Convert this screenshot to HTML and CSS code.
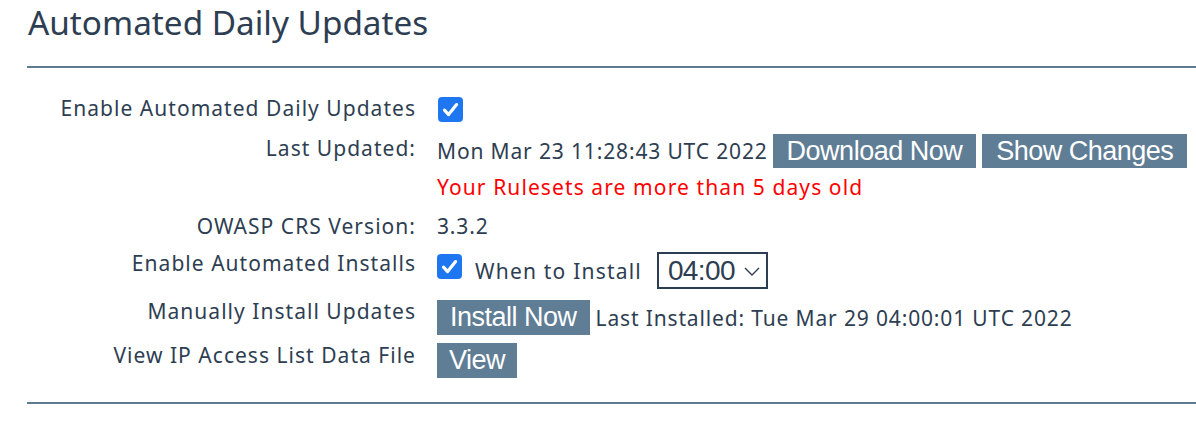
FILE: index.html
```html
<!DOCTYPE html>
<html>
<head>
<meta charset="utf-8">
<link rel="stylesheet" href="styles.css">
</head>
<body>
<div class="page">
  <h1 class="title">Automated Daily Updates</h1>
  <hr class="rule rule-top">
  <div class="form">
    <div class="row row-daily">
      <div class="label">Enable Automated Daily Updates</div>
      <div class="value value-inline"><span class="check"><svg viewBox="0 0 25 25" width="25" height="25"><rect x="0" y="0" width="25" height="25" rx="4" fill="#1e77f0"/><path d="M6.5 13.2 L10.6 17.6 L18.6 7.6" fill="none" stroke="#fff" stroke-width="3.2" stroke-linecap="round" stroke-linejoin="round"/></svg></span></div>
    </div>
    <div class="row row-updated">
      <div class="label">Last Updated:</div>
      <div class="value value-inline">
        <span class="text">Mon Mar 23 11:28:43 UTC 2022</span>
        <button class="btn btn-download">Download Now</button>
        <button class="btn btn-changes">Show Changes</button>
      </div>
    </div>
    <div class="row row-warning">
      <div class="label"></div>
      <div class="value warning">Your Rulesets are more than 5 days old</div>
    </div>
    <div class="row row-version">
      <div class="label">OWASP CRS Version:</div>
      <div class="value">3.3.2</div>
    </div>
    <div class="row row-installs">
      <div class="label">Enable Automated Installs</div>
      <div class="value value-inline">
        <span class="check"><svg viewBox="0 0 25 25" width="25" height="25"><rect x="0" y="0" width="25" height="25" rx="4" fill="#1e77f0"/><path d="M6.5 13.2 L10.6 17.6 L18.6 7.6" fill="none" stroke="#fff" stroke-width="3.2" stroke-linecap="round" stroke-linejoin="round"/></svg></span>
        <span class="text when">When to Install</span>
        <span class="select"><span class="select-text">04:00</span><svg class="chev" viewBox="0 0 16 9" width="16" height="9"><path d="M1 1 L8 8 L15 1" fill="none" stroke="#2e3e50" stroke-width="1.4"/></svg></span>
      </div>
    </div>
    <div class="row row-manual">
      <div class="label">Manually Install Updates</div>
      <div class="value value-inline">
        <button class="btn btn-install">Install Now</button>
        <span class="text installed">Last Installed: Tue Mar 29 04:00:01 UTC 2022</span>
      </div>
    </div>
    <div class="row row-view">
      <div class="label">View IP Access List Data File</div>
      <div class="value value-inline">
        <button class="btn btn-view">View</button>
      </div>
    </div>
  </div>
  <hr class="rule rule-bottom">
</div>
</body>
</html>
```
FILE: styles.css
```css
html, body {
  margin: 0;
  padding: 0;
  background: #ffffff;
}
body {
  font-family: "Noto Sans", "Open Sans", sans-serif;
  color: #2e3e52;
}
.page {
  padding-left: 27px;
}
.title {
  margin: 0;
  padding-top: 0;
  padding-left: 1px;
  font-size: 33.3px;
  font-weight: 400;
  line-height: 44px;
  color: #2e3e52;
}
.rule {
  border: 0;
  height: 2px;
  background: #5f7a8d;
  margin: 0;
}
.rule-top {
  margin-top: 22px;
}
.rule-bottom {
  margin-top: 24px;
}
.form {
  padding-top: 25px;
}
.row {
  display: grid;
  grid-template-columns: 389px 1fr;
  column-gap: 21px;
  align-items: start;
}
.label {
  text-align: right;
  font-size: 21px;
  letter-spacing: 1.03px;
  line-height: 26px;
  white-space: nowrap;
}
.value {
  font-size: 21px;
  letter-spacing: 0.85px;
  line-height: 26px;
  white-space: nowrap;
}
.value-inline {
  display: flex;
  align-items: flex-start;
}
.check {
  display: inline-flex;
  width: 25px;
  height: 25px;
}
.row-daily {
  height: 41px;
}
.row-daily .label {
  padding-top: 2px;
}
.row-daily .check {
  margin-top: 4px;
  margin-left: 1px;
}
.row-updated {
  height: 40px;
}
.row-updated .label {
  padding-top: 1px;
}
.row-updated .text {
  margin-top: 4px;
  margin-right: 5px;
}
.btn {
  font-family: "Liberation Sans", Arial, sans-serif;
  font-size: 27px;
  letter-spacing: -0.5px;
  color: #ffffff;
  background: #5f7d95;
  border: 0;
  border-radius: 0;
  height: 35px;
  padding: 0 14px;
  line-height: 35px;
  margin: 0;
}
.btn-download,
.btn-changes {
  height: 34px;
  line-height: 34px;
}
.btn-changes {
  margin-left: 6px;
}
.warning {
  color: #ff0000;
  letter-spacing: 1.1px;
}
.row-warning {
  height: 39px;
}
.row-version {
  height: 37px;
}
.row-installs {
  height: 48px;
}
.row-installs .check {
  margin-top: 4px;
}
.when {
  margin-left: 13px;
  margin-top: 8px;
  letter-spacing: 1.2px;
}
.select {
  display: inline-flex;
  align-items: center;
  box-sizing: border-box;
  width: 111px;
  height: 37px;
  margin-left: 15px;
  margin-top: 2px;
  border: 2px solid #2e3e52;
  padding-left: 9px;
  font-family: "Liberation Sans", Arial, sans-serif;
  font-size: 28px;
  letter-spacing: -0.6px;
  color: #2e3e52;
}
.chev {
  margin-left: 9px;
  margin-top: 2px;
}
.row-manual {
  height: 44px;
}
.row-manual .btn {
  margin-top: 2px;
}
.btn-install {
  padding: 0 13px;
}
.installed {
  margin-left: 6px;
  margin-top: 7px;
}
.row-view {
  height: 36px;
}
.row-view .btn {
  margin-top: 1px;
}
.btn-view {
  padding: 0 12px;
}
```
